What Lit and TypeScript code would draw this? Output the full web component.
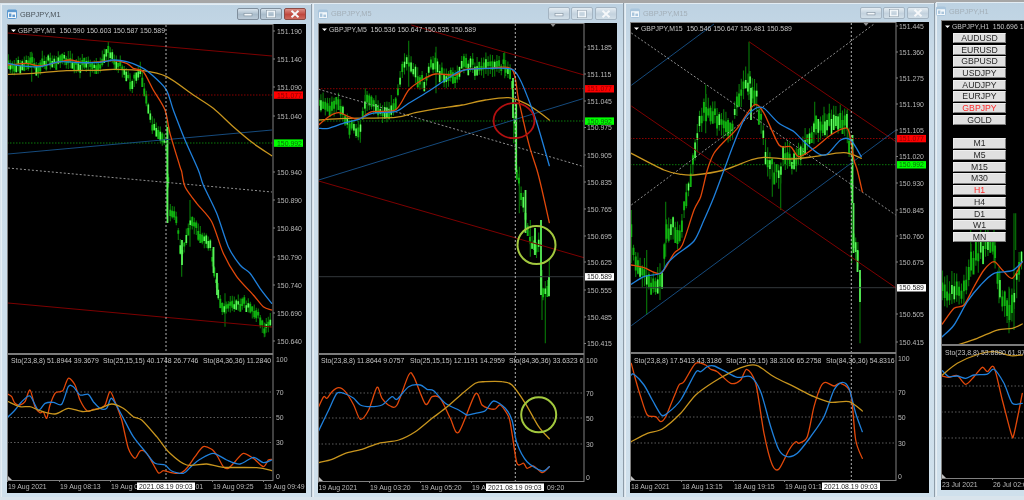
import { LitElement, html, css, svg } from "lit";
import { customElement, property } from "lit/decorators.js";

type P = [number, number];
const Z = (ox: number, oy: number, s: string): P[] =>
  s.trim().split(/\s+/).map((t) => {
    const [x, y] = t.split(",").map(Number);
    return [ox + x / 3, oy + y / 3] as P;
  });
// Catmull-Rom smoothing through the sampled curve points
const smooth = (p: P[]) => {
  const f = (n: number) => n.toFixed(1);
  let d = `M${f(p[0][0])} ${f(p[0][1])}`;
  for (let i = 0; i < p.length - 1; i++) {
    const a = p[Math.max(i - 1, 0)], b = p[i], c = p[i + 1], e = p[Math.min(i + 2, p.length - 1)];
    const t = 0.14;
    d += `C${f(b[0] + (c[0] - a[0]) * t)} ${f(b[1] + (c[1] - a[1]) * t)} ${f(c[0] - (e[0] - b[0]) * t)} ${f(c[1] - (e[1] - b[1]) * t)} ${f(c[0])} ${f(c[1])}`;
  }
  return d;
};

function rng(seed: number) {
  let s = seed;
  return () => {
    s = (s * 16807) % 2147483647;
    return s / 2147483647;
  };
}
function candles(keys: P[], step: number, amp: number, seed: number, spikes: P[][]) {
  const r = rng(seed);
  let wick = "", body = "", bright = "";
  const f = (n: number) => n.toFixed(1);
  let i = 0;
  for (let x = keys[0][0]; x <= keys[keys.length - 1][0]; x += step) {
    while (i < keys.length - 2 && keys[i + 1][0] < x) i++;
    const [a, b] = [keys[i], keys[i + 1]];
    const y = a[1] + ((b[1] - a[1]) * (x - a[0])) / (b[0] - a[0] || 1) + (r() - 0.5) * amp * 0.6;
    const hi = y - amp * (0.45 + r() * 0.6), lo = y + amp * (0.45 + r() * 0.6);
    wick += `M${f(x)} ${f(hi)}V${f(lo)}`;
    const t = y - amp * 0.55 * r(), h = amp * (0.35 + r() * 0.7);
    body += `M${f(x)} ${f(t)}V${f(t + h)}`;
    if (r() > 0.6) bright += `M${f(x)} ${f(t)}V${f(t + h)}`;
  }
  for (const s of spikes) wick += `M${f(s[0][0])} ${f(s[0][1])}V${f(s[1][1])}`;
  return { wick, body, bright };
}
const bars = (b: number[][]) => b.map((s) => `M${s[0]} ${s[1]}V${s[2]}`).join("");

interface Cfg {
  id: string; x: number; top: number; right: number; bottom: number;
  cx: number; cy: number; cr: number; cb: number;
  ax: number; div: number; subB: number; lblX: number;
  title: string; active?: boolean;
  legend: string; legX: number;
  c: { wick: string; body: string; bright: string }; solid?: string;
  lines: [string, number, number, number, number][];
  red: number; green: number; last?: number; vx?: number;
  ma: P[][]; sub: P[][];
  prices: [string, number][];
  subLegend: [string, number][]; subY: number;
  lv: [number, number, number]; lvT: number[];
  times: [string, number][]; box?: [number, number];
  rings?: [number, number, number, number, string][];
  notch?: number; buttons?: boolean;
}

const chart1: Cfg = {
  id: "a", x: 1, top: 4, right: 312, bottom: 497, cx: 7, cy: 24, cr: 306, cb: 493,
  ax: 273, div: 354, subB: 480, lblX: 277, title: "GBPJPY,M1", active: true,
  legend: "GBPJPY,M1  150.590 150.603 150.587 150.589", legX: 18,
  c: candles(
    Z(0, 0, "25,190 40,212 60,190 80,185 95,175 110,215 130,180 160,185 205,175 225,195 260,190 295,205 325,150 345,190 370,205 395,250 420,205 440,300 455,370 480,400 498,430 503,510").concat(
      Z(0, 170, "510,130 525,130 545,260 570,150 600,190 630,225 645,310 665,420 700,400 735,400 770,430 795,480 815,440")),
    2, 9, 11,
    ([[325,125,200],[95,155,245],[240,175,235],[545,770,830],[570,600,740],[675,880,980],[795,970,1010],[390,220,270],[500,360,480],[500,440,650]] as number[][]).map((s) => [[s[0] / 3, s[1] / 3], [s[0] / 3, s[2] / 3]] as P[])),
  solid: bars([[167.5, 127, 223], [213.5, 247, 273], [217, 273, 295], [182, 240, 265]]),
  lines: [["dred", 8, 33, 272, 56], ["dblue", 8, 154, 272, 130], ["dot", 8, 168, 272, 192], ["dred", 8, 303, 272, 327]],
  red: 95, green: 143, vx: 166,
  ma: [
    Z(0, 0, "25,223 100,220 200,212 300,211 340,208 430,212 500,230 580,285 640,325 700,380 760,430 815,467"),
    Z(0, 0, "25,195 80,190 120,198 180,185 210,180 250,188 300,185 340,182 380,190 400,205 430,215 460,270 495,330 510,400 540,500").concat(Z(0, 170, "545,5 555,50 590,100 635,155 670,250 710,320 760,375 790,410 815,420")),
    Z(0, 0, "25,190 60,197 120,200 180,185 240,188 300,187 340,180 380,185 420,200 450,220 498,268 520,330 555,420 595,510").concat(Z(0, 170, "610,45 650,130 685,230 720,285 750,310 780,355 815,400")),
  ],
  sub: [
    Z(0, 340, "25,163 35,170 45,190 60,195 75,185 90,150 105,200 120,218 130,215 140,235 150,195 165,160 180,155 190,150 205,115 225,135 240,180 262,213 280,208 300,205 315,195 330,155 345,185 365,240 385,325 405,355 420,333 435,335 450,355 475,398 490,392 510,397 540,400 560,385 585,350 610,320 635,328 650,345 670,380 685,385 705,365 730,340 760,355 790,380 805,360 815,358"),
    Z(0, 340, "25,230 45,210 65,185 90,168 115,210 135,190 160,187 185,193 205,140 220,140 240,165 265,163 280,185 300,205 320,205 335,175 365,225 400,290 440,340 465,370 495,375 515,393 550,400 575,378 600,358 640,340 680,360 720,372 760,352 790,368 815,360"),
    Z(0, 340, "25,185 60,200 90,200 120,212 165,222 205,205 250,215 300,205 335,192 370,205 400,230 425,240 470,290 510,340 560,375 620,372 670,382 770,383 815,392"),
  ],
  prices: [["151.190", 31], ["151.140", 59], ["151.090", 87], ["151.040", 116], ["150.940", 172], ["150.890", 200], ["150.840", 228], ["150.790", 257], ["150.740", 285], ["150.690", 313], ["150.640", 341]],
  subLegend: [["Sto(23,8,8) 51.8944 39.3679", 11], ["Sto(25,15,15) 40.1748 26.7746", 103], ["Sto(84,36,36) 11.2840", 203]], subY: 360,
  lv: [392, 417.5, 442.5], lvT: [359, 392, 417, 442],
  times: [["19 Aug 2021", 8], ["19 Aug 08:13", 60], ["19 Aug 0", 111], ["01", 195.5], ["19 Aug 09:25", 213], ["19 Aug 09:49", 264]],
  box: [137, 195],
};

const chart2: Cfg = {
  id: "b", x: 313, top: 3, right: 624, bottom: 497, cx: 318, cy: 23, cr: 617, cb: 493,
  ax: 584, div: 354, subB: 481, lblX: 587, title: "GBPJPY,M5",
  legend: "GBPJPY,M5  150.536 150.647 150.535 150.589", legX: 329,
  c: candles(
    Z(312, 0, "20,320 50,310 85,315 100,365 130,385 145,395 160,300 190,310 215,340 250,320 270,200 290,180 310,215 340,255 360,185 380,205 400,235 430,230 455,185 490,205 530,190 575,200 598,215 605,340 610,420 612,500").concat(
      Z(312, 170, "620,30 640,130 650,200 665,220 680,230 690,370 705,375 712,340")),
    2.2, 11, 23,
    ([[290,122,260],[372,140,280],[578,155,235],[160,265,350],[145,360,428],[605,310,430],[610,340,510],[700,880,1030],[712,780,890],[690,810,960],[655,660,770],[622,500,640]] as number[][]).map((s) => [[312 + s[0] / 3, s[1] / 3], [312, s[2] / 3]] as P[])),
  solid: bars([[516.2, 103, 172], [513, 78, 118], [525.5, 190, 233], [541, 220, 295], [549, 277, 296], [535, 228, 255]]),
  lines: [["dred", 411.3, 25, 584, 75], ["dred", 318.7, 181, 584, 257.7], ["dblue", 318.7, 180, 582.7, 98.7], ["dot", 318.7, 89.3, 584, 166.7]],
  red: 88.7, green: 121, last: 276.7, vx: 515.3,
  ma: [
    Z(312, 0, "20,360 100,355 250,352 310,338 380,325 450,315 520,300 590,293 640,310 680,335 712,360"),
    Z(312, 0, "20,375 50,350 80,338 110,350 140,358 180,335 250,330 290,270 330,240 370,222 430,225 460,208 530,205 600,208 620,300 650,430 675,510").concat(Z(312, 170, "690,60 712,158")),
    Z(312, 0, "20,385 50,385 100,368 140,358 180,340 250,335 290,310 340,280 400,240 440,215 470,208 530,205 600,208 625,240 650,300 675,370 712,497"),
  ],
  sub: [
    Z(312, 340, "20,200 35,170 45,175 60,155 80,143 100,155 125,195 145,238 170,210 195,142 210,175 235,198 255,195 290,105 305,110 340,192 360,170 385,175 415,235 440,277 490,162 510,195 530,205 550,207 565,195 590,230 600,280 615,370 635,370 645,385 665,378 690,398 712,380"),
    Z(312, 340, "20,272 50,210 75,160 100,162 125,175 145,195 175,200 210,195 240,170 255,178 290,140 325,135 345,148 365,152 400,190 440,210 465,225 490,220 520,212 545,183 580,205 600,240 615,310 645,365 690,393 712,380"),
    Z(312, 340, "20,368 60,358 100,340 150,328 200,310 260,300 310,275 360,235 400,205 440,170 490,130 520,125 570,125 600,135 640,190 680,260 712,296"),
  ],
  prices: [["151.185", 47], ["151.115", 74], ["151.045", 101], ["150.975", 127.5], ["150.905", 155], ["150.835", 182], ["150.765", 209], ["150.695", 236], ["150.625", 262], ["150.555", 290], ["150.485", 317], ["150.415", 343.5]],
  subLegend: [["Sto(23,8,8) 11.8644 9.0757", 321], ["Sto(25,15,15) 12.1191 14.2959", 410], ["Sto(84,36,36) 33.6323 6", 509]], subY: 360,
  lv: [393, 418, 444], lvT: [360, 393, 418, 444],
  times: [["19 Aug 2021", 318.5], ["19 Aug 03:20", 370], ["19 Aug 05:20", 421], ["19 A", 472], ["09:20", 547]],
  box: [486, 544],
  rings: [[514, 120.7, 20.5, 17.5, "rr"], [536.5, 245, 19, 19, "rg"], [538.7, 414.8, 17.5, 17.5, "rg"]],
  notch: 553,
};

const chart3: Cfg = {
  id: "c", x: 625, top: 3, right: 935, bottom: 497, cx: 630, cy: 22, cr: 929, cb: 493,
  ax: 896, div: 353, subB: 480, lblX: 899, title: "GBPJPY,M15",
  legend: "GBPJPY,M15  150.546 150.647 150.481 150.589", legX: 641,
  c: candles(
    Z(624, 170, "22,200 30,250 45,300 60,310 80,350 100,340 115,340 125,180 145,170 165,200 190,70 205,0").concat(
      Z(624, 0, "220,400 245,320 270,350 300,370 320,400 345,290 365,240 390,280 410,350 430,490 470,530 480,450 510,490 530,470 570,380 600,375 640,350 672,370 680,500")).concat(
      Z(624, 170, "685,100 690,240 705,260 710,395")),
    2.2, 15, 37,
    ([[375,125,300],[245,255,400],[572,305,400],[600,320,400],[670,328,430],[125,605,770],[68,750,945],[108,790,900],[470,510,630],[445,510,590],[708,880,1030],[683,500,790],[22,630,790]] as number[][]).map((s) => [[624 + s[0] / 3, s[1] / 3], [624, s[2] / 3]] as P[])),
  solid: bars([[852.5, 135, 203], [853.5, 203, 253], [860, 270, 302], [857.5, 250, 272], [751, 88, 120]]),
  lines: [["dred", 749, 41.7, 896, 141.7], ["dred", 631.3, 106, 895.7, 287.7], ["dblue", 631.3, 85.3, 714, 24], ["dblue", 631.3, 325.7, 896, 130], ["dot", 631.3, 33, 895.7, 215], ["dot", 631.3, 205, 874, 24]],
  red: 138.5, green: 164.7, last: 287.7, vx: 851.3,
  ma: [
    Z(624, 0, "22,460 120,510").concat(Z(624, 170, "170,13 210,15 300,0")).concat(Z(624, 0, "380,480 420,472 500,477 570,470 660,458 712,475")),
    Z(624, 170, "22,285 60,293 110,310 150,250 175,225 210,120 230,80 250,0").concat(Z(624, 0, "270,460 300,425 340,385 390,315 420,340 465,435 500,440 525,470 570,445 620,405 660,385 675,395 690,480 700,510")).concat(Z(624, 170, "715,65")),
    Z(624, 170, "22,343 60,320 110,310 130,280 160,252 210,213 240,150 270,80 300,0").concat(Z(624, 0, "330,430 360,360 395,325 420,325 465,370 510,395 545,430 585,462 610,462 650,420 680,420 712,470")),
  ],
  sub: [
    Z(624, 340, "22,70 35,120 50,170 70,225 95,230 110,245 125,230 150,170 165,135 180,125 215,70 245,75 260,88 280,95 320,130 350,120 368,88 395,130 420,280 445,375 465,387 495,330 515,305 525,310 550,290 570,200 590,140 605,127 630,138 650,130 680,160 695,300 715,355"),
    Z(624, 340, "22,105 30,103 60,135 85,180 112,225 130,220 170,180 215,97 230,95 250,80 270,78 300,92 340,112 380,110 410,155 440,260 465,330 490,350 520,340 560,290 600,230 630,150 655,127 675,145 695,220 715,275"),
    Z(624, 340, "22,305 70,280 115,267 170,220 215,165 270,125 320,97 370,77 400,77 450,110 510,140 570,170 620,187 675,185 715,213"),
  ],
  prices: [["151.445", 26], ["151.360", 52], ["151.275", 78], ["151.190", 104], ["151.105", 130], ["151.020", 156.5], ["150.930", 183], ["150.845", 210], ["150.760", 236], ["150.675", 262], ["150.505", 314], ["150.415", 342]],
  subLegend: [["Sto(23,8,8) 17.5413 43.3186", 634], ["Sto(25,15,15) 38.3106 65.2758", 726], ["Sto(84,36,36) 54.8316", 826]], subY: 360,
  lv: [392, 417, 443], lvT: [358.5, 392, 417, 443],
  times: [["18 Aug 2021", 631], ["18 Aug 13:15", 682], ["18 Aug 19:15", 734], ["19 Aug 01:1", 785]],
  box: [822, 880],
  notch: 866,
};

const chart4: Cfg = {
  id: "d", x: 936, top: 2, right: 1040, bottom: 496, cx: 941, cy: 20, cr: 1040, cb: 490,
  ax: 1100, div: 345, subB: 478, lblX: 1104, title: "GBPJPY,H1",
  legend: "GBPJPY,H1  150.696 15", legX: 952,
  c: candles(
    Z(924, 250, "55,125 75,130 100,120 125,120 140,40 160,5 185,-20 210,-30 225,120 255,180 270,140 285,50 298,20"),
    2.4, 18, 51,
    ([[255,860,1000],[270,640,990],[225,800,910],[140,690,830],[210,690,790],[275,640,750]] as number[][]).map((s) => [[924 + s[0] / 3, s[1] / 3], [924, s[2] / 3]] as P[])),
  lines: [], red: -20, green: -20,
  ma: [
    Z(924, 250, "100,285 160,265 220,240 265,235 295,222"),
    Z(924, 250, "55,222 90,175 120,165 150,110 180,60 210,35 235,60 265,85 295,35"),
    Z(924, 250, "55,260 90,225 130,155 170,105 210,70 265,62 295,35"),
  ],
  sub: [
    Z(924, 250, "55,378 75,382 100,377 125,403 150,380 175,352 190,365 210,352 235,450 262,552 270,552 295,430"),
    Z(924, 250, "55,362 75,380 100,378 125,385 150,375 190,372 210,358 240,400 265,460 295,460"),
    Z(924, 250, "55,375 100,340 165,312 210,305 260,317 295,315"),
  ],
  prices: [],
  subLegend: [["Sto(23,8,8) 53.8880 61.97", 945]], subY: 352,
  lv: [386, 412, 438], lvT: [],
  times: [["23 Jul 2021", 942], ["26 Jul 02:0", 993]],
  buttons: true,
};

const SYMS = ["AUDUSD", "EURUSD", "GBPUSD", "USDJPY", "AUDJPY", "EURJPY", "GBPJPY", "GOLD"];
const TFS = ["M1", "M5", "M15", "M30", "H1", "H4", "D1", "W1", "MN"];

@customElement("chart-window")
class ChartWindow extends LitElement {
  @property({ attribute: false }) cfg!: Cfg;

  static styles = css`
    :host { position: absolute; display: flex; flex-direction: column; box-sizing: border-box;
      background: linear-gradient(180deg, #bdd2e2 0, #cbdce9 60px, #cfe0ec 100%);
      border-right: 1px solid #8e9ca8; box-shadow: inset 1px 0 0 #e6eef4, inset 0 1px 0 #e2ecf3; }
    .bar { display: flex; align-items: center; flex: none; gap: 3px; box-sizing: border-box; }
    .icon { width: 10px; height: 10px; flex: none; }
    .title { font: 7.4px "Liberation Sans", Arial, sans-serif; color: #a3afb8; flex: 1; white-space: nowrap; overflow: hidden; }
    .title.on { color: #4a535a; }
    .btns { display: flex; gap: 1.6px; flex: none; }
    .btn { width: 22px; height: 12.5px; box-sizing: border-box; border: 1px solid #a4b4c2; border-radius: 2px;
      background: linear-gradient(180deg, #e4ecf2, #c3d2de 55%, #d2dfe8); display: flex; align-items: center; justify-content: center; }
    .btn.on { border-color: #7f8e9c; background: linear-gradient(180deg, #d8e3ec, #a9bccb 55%, #bccbd8); }
    .btn.close.on { border-color: #8c4a44; background: linear-gradient(180deg, #dc8f86, #c0483e 55%, #cc6a5e); }
    .btn svg { width: 12px; height: 8px; display: block; }
    .chart { position: relative; flex: none; background: #000; overflow: hidden; }
    .chart > svg { display: block; }
    text { font-family: "Liberation Sans", Arial, sans-serif; font-size: 6.9px; fill: #b8b8b8; dominant-baseline: central; white-space: pre; }
    .legend { fill: #c4c4c4; }
    .dark { fill: #222; }
    .redt { fill: #8c0000; }
    .greent { fill: #0c6a0c; }
    .frame { stroke: #808080; fill: none; stroke-width: 1; }
    .divbar { stroke: #7c7c7c; stroke-width: 2; }
    .wick { stroke: #087a08; stroke-width: 1.1; fill: none; }
    .body { stroke: #10b410; stroke-width: 1.9; fill: none; }
    .bright { stroke: #6cff6c; stroke-width: 1.1; fill: none; }
    .solid { stroke: #58f058; stroke-width: 1.8; fill: none; }
    .dred { stroke: #7d0000; stroke-width: 1; }
    .dblue { stroke: #154a7c; stroke-width: 1; }
    .dot { stroke: #a0a0a0; stroke-width: 0.9; stroke-dasharray: 2 2; }
    .hred { stroke: #8a0000; stroke-width: 1; stroke-dasharray: 1.5 1.5; }
    .hgreen { stroke: #0a7a0a; stroke-width: 1; stroke-dasharray: 1.5 1.5; }
    .hlast { stroke: #33383c; stroke-width: 1; }
    .vline { stroke: #c6c6c6; stroke-width: 0.9; stroke-dasharray: 2 2; }
    .lv { stroke: #5c5c5c; stroke-width: 1; stroke-dasharray: 1.5 2; }
    .c0, .c1, .c2 { fill: none; stroke-width: 1.3; stroke-linejoin: round; stroke-linecap: round; }
    .c0 { stroke: #c8951e; }
    .c1 { stroke: #e2480a; }
    .c2 { stroke: #1f80dc; }
    .rr { stroke: #b31010; stroke-width: 1.8; fill: none; }
    .rg { stroke: #a2c83e; stroke-width: 2; fill: none; }
    .tick { stroke: #808080; stroke-width: 1; }
    .sym { position: absolute; left: 12px; top: 13px; width: 53px; display: flex; flex-direction: column; gap: 1.5px; }
    .sym .b { height: 10.2px; box-sizing: border-box; background: #e0e0e0; border: 1px solid #808080; border-color: #efefef #7d7d7d #7d7d7d #efefef;
      font: 8.7px/8px "Liberation Sans", Arial, sans-serif; color: #2a2a2a; text-align: center; }
    .sym .b.hot { color: #ff2a2a; }
    .sym .gap { height: 10.4px; }
  `;

  private ctlIcon(on: boolean) {
    const c = on ? "#5d9ad0" : "#a9c5dc";
    return html`<svg class="icon" viewBox="0 0 10 10"><rect x=".5" y="1" width="9" height="8.5" rx="1" fill="#f2f7fb" stroke=${c}/><rect x=".5" y="1" width="9" height="2.2" fill=${c}/><rect x="2" y="4.5" width="2.4" height="3.4" fill=${c}/><rect x="5.4" y="5.6" width="2.6" height="2.4" fill=${c}/></svg>`;
  }

  render() {
    const k = this.cfg;
    const w = k.cr - k.cx, h = k.cb - k.cy;
    const l = k.cx, r = Math.min(k.ax, k.cr + 1), tb = k.subB;
    const on = !!k.active;
    return html`
      <div class="bar" style="height:${k.cy - k.top}px;padding:${k.id === "a" ? 0 : 1}px ${k.right - k.cr - 1}px 0 ${k.cx - k.x}px">
        ${this.ctlIcon(on)}
        <span class="title ${on ? "on" : ""}">${k.title}</span>
        ${k.buttons ? "" : html`<div class="btns">
          <div class="btn ${on ? "on" : ""}"><svg viewBox="0 0 12 8"><rect x="2" y="3.5" width="8" height="2.4" fill="#f4f8fb" stroke="#7e8e9c" stroke-width=".6"/></svg></div>
          <div class="btn ${on ? "on" : ""}"><svg viewBox="0 0 12 8"><rect x="2.5" y="1" width="7" height="6" fill="none" stroke="#f4f8fb" stroke-width="1.6"/><rect x="1.7" y=".2" width="8.6" height="7.6" fill="none" stroke="#7e8e9c" stroke-width=".5"/></svg></div>
          <div class="btn close ${on ? "on" : ""}"><svg viewBox="0 0 12 8"><path d="M2.5 .8 9.5 7.2M9.5 .8 2.5 7.2" stroke="#f6f8fa" stroke-width="1.9" fill="none"/></svg></div>
        </div>`}
      </div>
      <div class="chart" style="width:${w}px;height:${h}px;margin-left:${k.cx - k.x}px">
        <svg width=${w} height=${h} viewBox="${k.cx} ${k.cy} ${w} ${h}">
          <defs>
            <clipPath id="m${k.id}"><rect x=${l + 1} y=${k.cy + 1} width=${r - l - 1} height=${k.div - k.cy - 2}/></clipPath>
            <clipPath id="s${k.id}"><rect x=${l + 1} y=${k.div + 1} width=${r - l - 1} height=${tb - k.div - 1}/></clipPath>
          </defs>
          <g clip-path="url(#m${k.id})">
            <path class="wick" d=${k.c.wick}/>
            <path class="body" d=${k.c.body}/>
            <path class="bright" d=${k.c.bright}/>
            ${k.solid ? svg`<path class="solid" d=${k.solid}/>` : ""}
            ${k.last ? svg`<line class="hlast" x1=${l} x2=${r} y1=${k.last} y2=${k.last}/>` : ""}
            <line class="hred" x1=${l} x2=${r} y1=${k.red} y2=${k.red}/>
            <line class="hgreen" x1=${l} x2=${r} y1=${k.green} y2=${k.green}/>
            ${k.lines.map((q) => svg`<line class=${q[0]} x1=${q[1]} y1=${q[2]} x2=${q[3]} y2=${q[4]}/>`)}
            ${k.ma.map((p, i) => svg`<path class="c${i}" d=${smooth(p)}/>`)}
          </g>
          ${k.vx ? svg`<line class="vline" x1=${k.vx} x2=${k.vx} y1=${k.cy + 1} y2=${tb}/>` : ""}
          <g clip-path="url(#s${k.id})">
            ${k.lv.map((y) => svg`<line class="lv" x1=${l} x2=${r} y1=${y} y2=${y}/>`)}
            ${k.sub.map((p, i) => svg`<path class="c${i === 2 ? 0 : i === 1 ? 2 : 1}" d=${smooth(p)}/>`)}
            <polygon points="${l + 1},${tb} ${l + 1},${tb - 4} ${l + 5},${tb}" fill="#c0c0c0"/>
          </g>
          <rect class="frame" x=${l + 0.5} y=${k.cy + 0.5} width=${r - l - 0.5} height=${tb - k.cy}/>
          <line class="divbar" x1=${l} x2=${r} y1=${k.div} y2=${k.div}/>
          ${k.rings ? k.rings.map((c) => svg`<ellipse class=${c[4]} cx=${c[0]} cy=${c[1]} rx=${c[2]} ry=${c[3]}/>`) : ""}
          <polygon points="${l + 4},${k.cy + 5.5} ${l + 9},${k.cy + 5.5} ${l + 6.5},${k.cy + 8}" fill="#fff"/>
          <text class="legend" x=${k.legX} y=${k.cy + 6.5}>${k.legend}</text>
          ${k.notch ? svg`<polygon points="${k.notch - 2.5},${k.cy + 1} ${k.notch + 2.5},${k.cy + 1} ${k.notch},${k.cy + 4}" fill="#8f8f8f"/>` : ""}
          ${k.subLegend.map((t) => svg`<text class="legend" x=${t[1]} y=${k.subY}>${t[0]}</text>`)}
          ${k.prices.map((t) => svg`<line class="tick" x1=${k.ax} x2=${k.ax + 2} y1=${t[1]} y2=${t[1]}/><text x=${k.lblX} y=${t[1]}>${t[0]}</text>`)}
          ${k.lvT.map((y, i) => svg`<text x=${k.lblX - 1} y=${y}>${["100", "70", "50", "30"][i]}</text>`)}
          ${k.lvT.length ? svg`<text x=${k.lblX - 1} y=${k.subB - 4}>0</text>` : ""}
          ${k.times.map((t) => svg`${t[0].length > 5 || t[0] === "19 A" ? svg`<line class="tick" x1=${t[1] - 0.5} x2=${t[1] - 0.5} y1=${tb} y2=${tb + 2}/>` : ""}<text x=${t[1]} y=${tb + 6}>${t[0]}</text>`)}
          ${k.box ? svg`<rect x=${k.box[0]} y=${tb + 2.5} width=${k.box[1] - k.box[0]} height="7.5" fill="#fff"/><text class="dark" x=${k.box[0] + 2} y=${tb + 6.2}>2021.08.19 09:03</text>` : ""}
          ${k.prices.length ? svg`
            <rect x=${k.ax + 1} y=${k.red - 3.6} width="29" height="7.4" fill="#f00"/>
            <text class="redt" x=${k.lblX} y=${k.red}>151.077</text>
            <rect x=${k.ax + 1} y=${k.green - 3.6} width="29" height="7.4" fill="#0f0"/>
            <text class="greent" x=${k.lblX} y=${k.green}>150.992</text>
            ${k.last ? svg`<rect x=${k.ax + 1} y=${k.last - 3.6} width="29" height="7.4" fill="#fff"/><text class="dark" x=${k.lblX} y=${k.last}>150.589</text>` : ""}` : ""}
        </svg>
        ${k.buttons ? html`<div class="sym">
          ${SYMS.map((s) => html`<div class="b ${s === "GBPJPY" ? "hot" : ""}">${s}</div>`)}
          <div class="gap"></div>
          ${TFS.map((s) => html`<div class="b ${s === "H1" ? "hot" : ""}">${s}</div>`)}
        </div>` : ""}
      </div>`;
  }
}

@customElement("app-root")
class AppRoot extends LitElement {
  static styles = css`
    :host { display: block; width: 1024px; height: 500px; overflow: hidden; }
    .desk { position: relative; width: 1024px; height: 500px; overflow: hidden; background: linear-gradient(180deg, #a6a6a6 0, #a6a6a6 3px, #d9e4ec 3px); filter: blur(0.3px); }
  `;
  render() {
    return html`<div class="desk">
      ${[chart1, chart2, chart3, chart4].map(
        (c) => html`<chart-window .cfg=${c} style="left:${c.x}px;top:${c.top}px;width:${c.right - c.x}px;height:${c.bottom - c.top}px"></chart-window>`
      )}
    </div>`;
  }
}
